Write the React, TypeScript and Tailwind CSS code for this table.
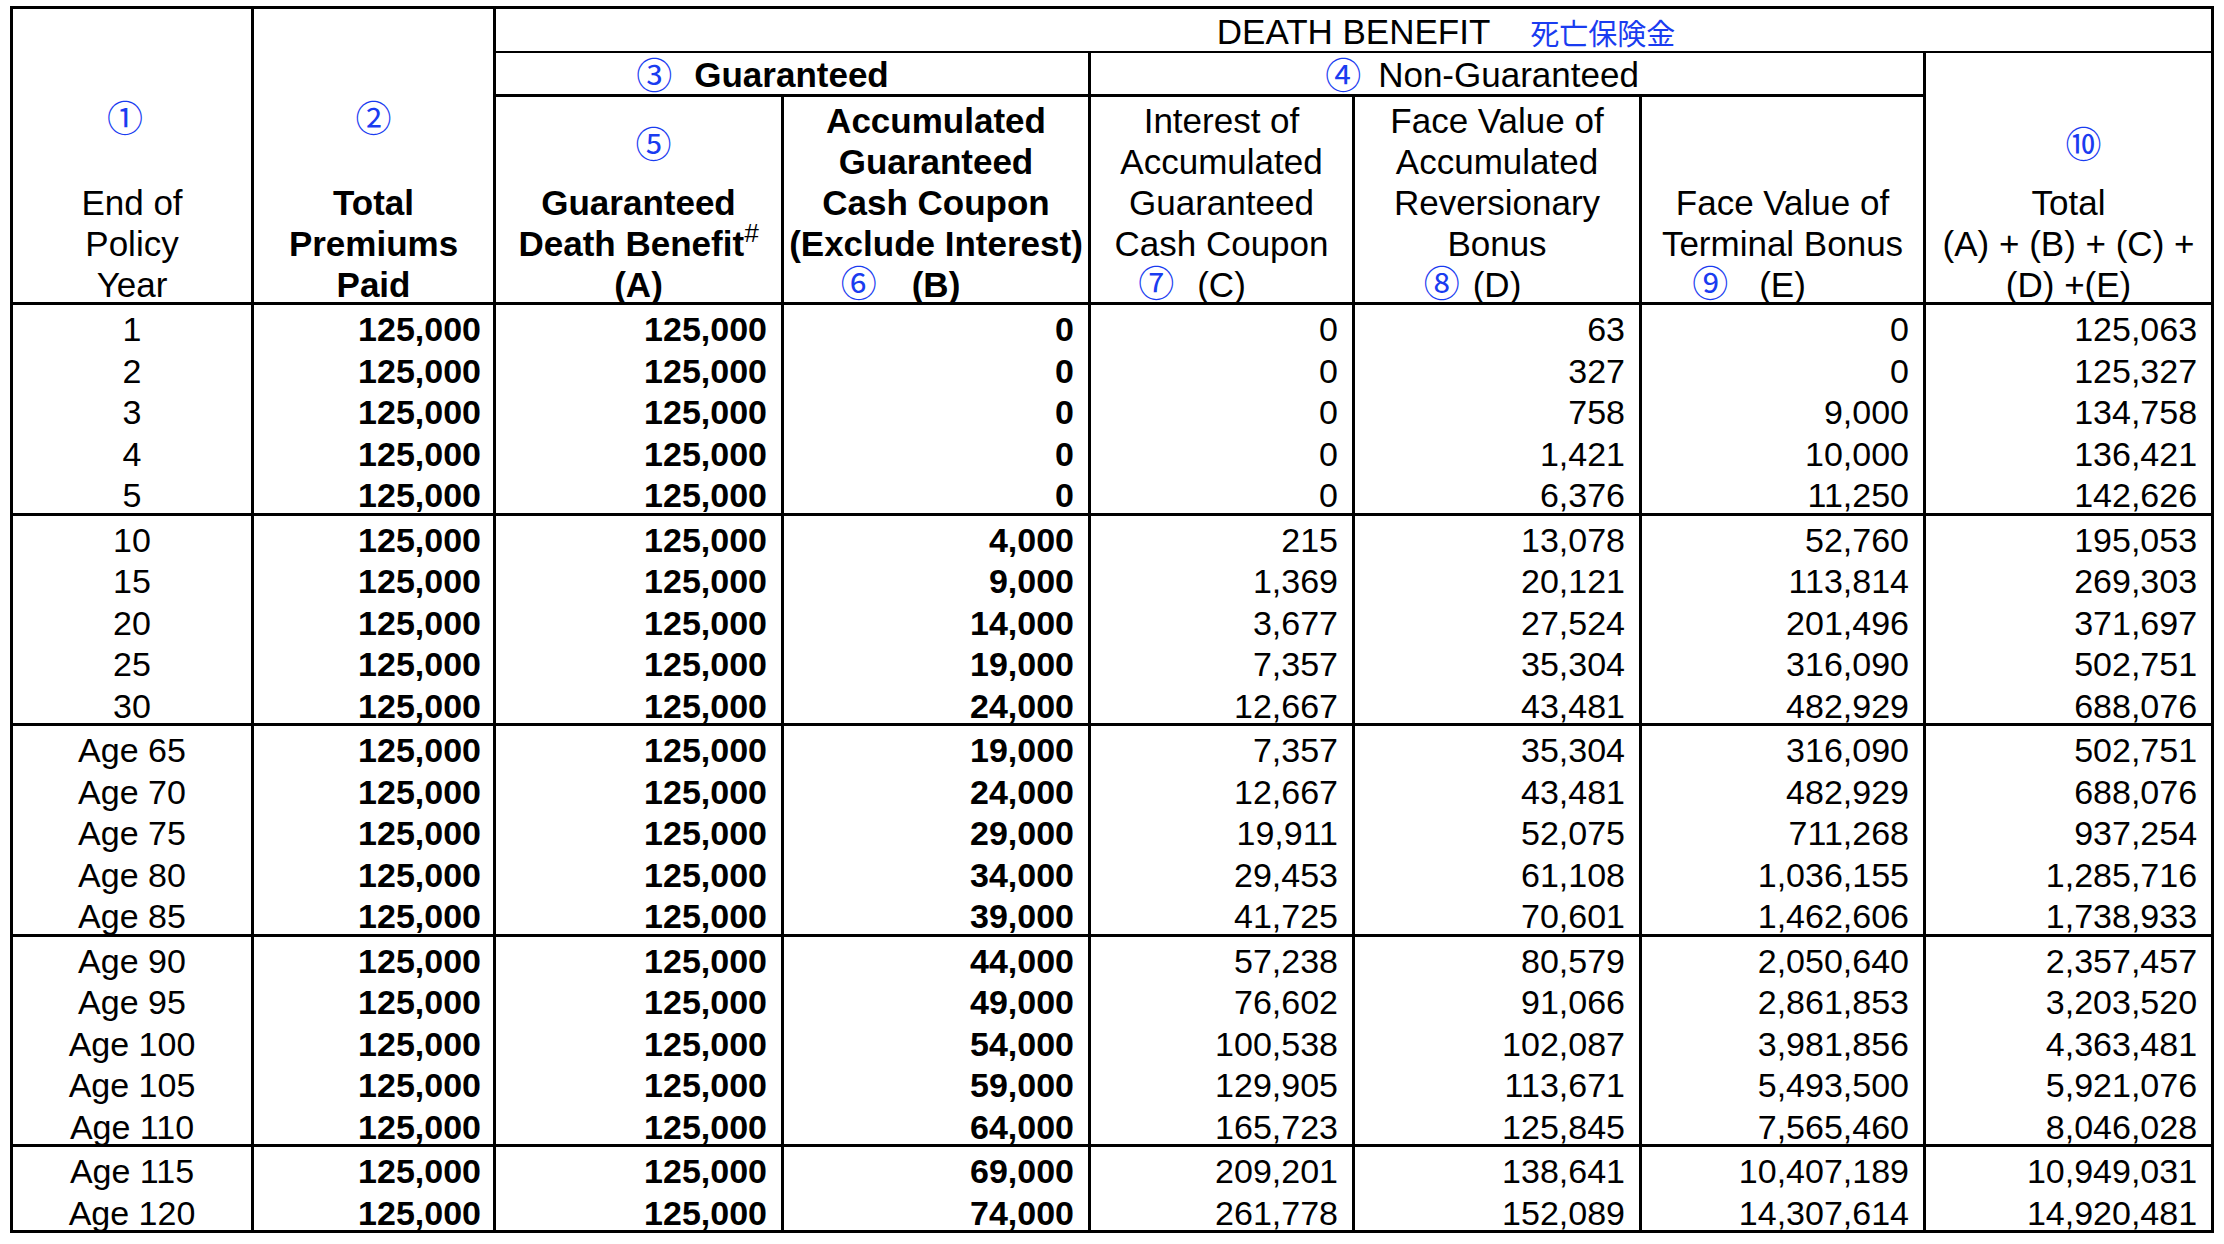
import React from 'react';

type Row = string[];

const groups: Row[][] = [
  [
    ['1', '125,000', '125,000', '0', '0', '63', '0', '125,063'],
    ['2', '125,000', '125,000', '0', '0', '327', '0', '125,327'],
    ['3', '125,000', '125,000', '0', '0', '758', '9,000', '134,758'],
    ['4', '125,000', '125,000', '0', '0', '1,421', '10,000', '136,421'],
    ['5', '125,000', '125,000', '0', '0', '6,376', '11,250', '142,626'],
  ],
  [
    ['10', '125,000', '125,000', '4,000', '215', '13,078', '52,760', '195,053'],
    ['15', '125,000', '125,000', '9,000', '1,369', '20,121', '113,814', '269,303'],
    ['20', '125,000', '125,000', '14,000', '3,677', '27,524', '201,496', '371,697'],
    ['25', '125,000', '125,000', '19,000', '7,357', '35,304', '316,090', '502,751'],
    ['30', '125,000', '125,000', '24,000', '12,667', '43,481', '482,929', '688,076'],
  ],
  [
    ['Age 65', '125,000', '125,000', '19,000', '7,357', '35,304', '316,090', '502,751'],
    ['Age 70', '125,000', '125,000', '24,000', '12,667', '43,481', '482,929', '688,076'],
    ['Age 75', '125,000', '125,000', '29,000', '19,911', '52,075', '711,268', '937,254'],
    ['Age 80', '125,000', '125,000', '34,000', '29,453', '61,108', '1,036,155', '1,285,716'],
    ['Age 85', '125,000', '125,000', '39,000', '41,725', '70,601', '1,462,606', '1,738,933'],
  ],
  [
    ['Age 90', '125,000', '125,000', '44,000', '57,238', '80,579', '2,050,640', '2,357,457'],
    ['Age 95', '125,000', '125,000', '49,000', '76,602', '91,066', '2,861,853', '3,203,520'],
    ['Age 100', '125,000', '125,000', '54,000', '100,538', '102,087', '3,981,856', '4,363,481'],
    ['Age 105', '125,000', '125,000', '59,000', '129,905', '113,671', '5,493,500', '5,921,076'],
    ['Age 110', '125,000', '125,000', '64,000', '165,723', '125,845', '7,565,460', '8,046,028'],
  ],
  [
    ['Age 115', '125,000', '125,000', '69,000', '209,201', '138,641', '10,407,189', '10,949,031'],
    ['Age 120', '125,000', '125,000', '74,000', '261,778', '152,089', '14,307,614', '14,920,481'],
  ],
];

// circled reference number; zero line-height so it never grows the header lines
const Circ = ({ n, className = '' }: { n: string; className?: string }) => (
  <span
    className={`relative text-[#1a3cf0] text-[36px] leading-[0px] font-normal [font-family:'Noto_Sans_CJK_JP',sans-serif] ${className}`}
  >
    {n}
  </span>
);

// last header line: letter centred, circled number sitting to its left
const Tagged = ({ n, label, gap }: { n: string; label: string; gap: string }) => (
  <div className="grid grid-cols-[1fr_auto_1fr]">
    <span className={`justify-self-end ${gap}`}>
      <Circ n={n} className="top-[0px]" />
    </span>
    <span>{label}</span>
    <span />
  </div>
);

const hd = 'border-r-[3px] border-b-[3px] border-black p-0 align-bottom text-center leading-[41px] whitespace-nowrap';
// header lines sit right down on the rule below them
const low = 'relative top-[3px]';

export default function App() {
  return (
    <div className="min-h-screen bg-white pt-[6px] pl-[10px] text-black [font-family:'Liberation_Sans',Arial,sans-serif]">
      <table className="table-fixed border-separate border-spacing-0 border-l-[3px] border-t-[3px] border-black w-[2204px] text-[35px]">
        <colgroup>
          <col className="w-[241px]" />
          <col className="w-[242px]" />
          <col className="w-[288px]" />
          <col className="w-[307px]" />
          <col className="w-[264px]" />
          <col className="w-[287px]" />
          <col className="w-[284px]" />
          <col className="w-[288px]" />
        </colgroup>
        <thead>
          <tr className="h-[44px]">
            <th rowSpan={3} className={`${hd} font-normal`}>
              <div className={low}>
                <div className="mb-[44px] pr-[14px]">
                  <Circ n="①" className="top-[2px]" />
                </div>
                <div>End of</div>
                <div>Policy</div>
                <div>Year</div>
              </div>
            </th>
            <th rowSpan={3} className={`${hd} font-bold`}>
              <div className={low}>
                <div className="mb-[44px]">
                  <Circ n="②" className="top-[2px]" />
                </div>
                <div>Total</div>
                <div>Premiums</div>
                <div>Paid</div>
              </div>
            </th>
            <th colSpan={6} className="border-r-[3px] border-b-2 border-black p-0 align-bottom font-normal leading-[38px] whitespace-nowrap">
              <div className="grid grid-cols-[1fr_auto_1fr]">
                <span />
                <span>DEATH BENEFIT</span>
                <span className="text-left pl-[40px] text-[29px] text-[#1a3cf0] [font-family:'Noto_Sans_CJK_JP',sans-serif]">
                  死亡保険金
                </span>
              </div>
            </th>
          </tr>
          <tr className="h-[44px]">
            <th colSpan={2} className="border-r-[3px] border-b-[3px] border-black p-0 align-bottom font-bold leading-[38px] whitespace-nowrap">
              <div className="text-center pr-[59px]">
                <Circ n="③" className="top-[2px] mr-[22px]" />
                <span>Guaranteed</span>
              </div>
            </th>
            <th colSpan={3} className="border-r-[3px] border-b-[3px] border-black p-0 align-bottom font-normal leading-[38px] whitespace-nowrap">
              <div className="text-center pr-[50px]">
                <Circ n="④" className="top-[2px] mr-[17px]" />
                <span>Non-Guaranteed</span>
              </div>
            </th>
            <th rowSpan={2} className={`${hd} font-normal`}>
              <div className={low}>
                <div className="mb-[18px] pl-[30px]">
                  <Circ n="⑩" className="top-[2px]" />
                </div>
                <div>Total</div>
                <div>(A) + (B) + (C) +</div>
                <div>(D) +(E)</div>
              </div>
            </th>
          </tr>
          <tr className="h-[208px]">
            <th className={`${hd} font-bold`}>
              <div className={low}>
                <div className="mb-[18px] pl-[30px]">
                  <Circ n="⑤" className="top-[2px]" />
                </div>
                <div>Guaranteed</div>
                <div>
                  Death Benefit
                  <sup className="text-[26px] italic font-normal top-[-14px]">#</sup>
                </div>
                <div>(A)</div>
              </div>
            </th>
            <th className={`${hd} font-bold`}>
              <div className={low}>
                <div>Accumulated</div>
                <div>Guaranteed</div>
                <div>Cash Coupon</div>
                <div>(Exclude Interest)</div>
                <Tagged n="⑥" label="(B)" gap="mr-[35px]" />
              </div>
            </th>
            <th className={`${hd} font-normal`}>
              <div className={low}>
                <div>Interest of</div>
                <div>Accumulated</div>
                <div>Guaranteed</div>
                <div>Cash Coupon</div>
                <Tagged n="⑦" label="(C)" gap="mr-[23px]" />
              </div>
            </th>
            <th className={`${hd} font-normal`}>
              <div className={low}>
                <div>Face Value of</div>
                <div>Accumulated</div>
                <div>Reversionary</div>
                <div>Bonus</div>
                <Tagged n="⑧" label="(D)" gap="mr-[13px]" />
              </div>
            </th>
            <th className={`${hd} font-normal`}>
              <div className={low}>
                <div>Face Value of</div>
                <div>Terminal Bonus</div>
                <Tagged n="⑨" label="(E)" gap="mr-[31px]" />
              </div>
            </th>
          </tr>
        </thead>
        {groups.map((g, gi) => (
          <tbody key={gi} className="text-[34px]">
            {g.map((r, ri) => {
              const last = ri === g.length - 1;
              return (
                <tr key={ri} className={last ? 'h-[44.5px]' : 'h-[41.5px]'}>
                  {r.map((c, ci) => (
                    <td
                      key={ci}
                      className={`border-r-[3px] border-black align-top pt-[9px] leading-[30px] whitespace-nowrap ${
                        last ? 'border-b-[3px]' : ''
                      } ${ci === 0 ? 'text-center px-0' : ci === 1 ? 'text-right pr-[12px]' : 'text-right pr-[14px]'} ${
                        ci >= 1 && ci <= 3 ? 'font-bold' : 'font-normal'
                      }`}
                    >
                      {c}
                    </td>
                  ))}
                </tr>
              );
            })}
          </tbody>
        ))}
      </table>
    </div>
  );
}
